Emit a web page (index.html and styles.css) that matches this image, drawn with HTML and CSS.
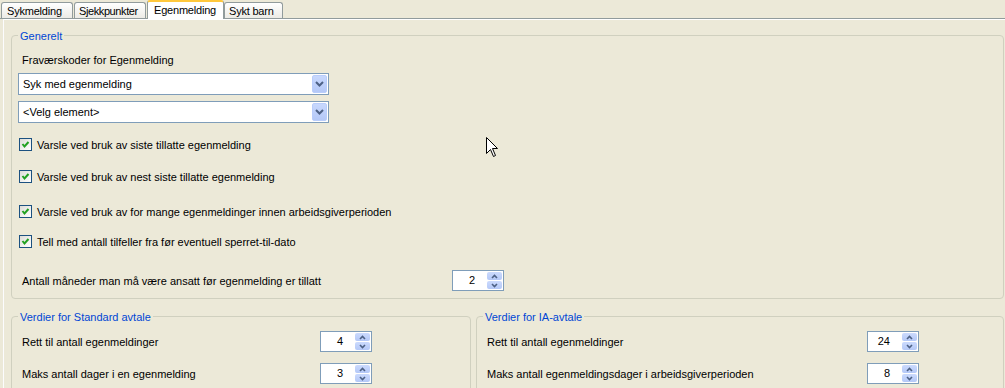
FILE: index.html
```html
<!DOCTYPE html>
<html lang="no">
<head>
    <meta charset="UTF-8">
    <title>Egenmelding</title>
    <link rel="stylesheet" href="styles.css">
</head>
<body>
<div class="tabs">
    <div class="tab t-syk">Sykmelding</div>
    <div class="tab t-sjekk">Sjekkpunkter</div>
    <div class="tab t-egen active">Egenmelding</div>
    <div class="tab t-barn">Sykt barn</div>
</div>

<div class="page">
    <!-- Generelt -->
    <div class="group general">
        <span class="group-title">Generelt</span>
        <div class="field-label">Fraværskoder for Egenmelding</div>
        <div class="combo first">
            <span class="combo-text">Syk med egenmelding</span>
            <div class="combo-btn"><svg width="9" height="6" viewBox="0 0 9 6"><path d="M1 1 L4.5 4.5 L8 1" fill="none" stroke="#4d6185" stroke-width="2"/></svg></div>
        </div>
        <div class="combo">
            <span class="combo-text">&lt;Velg element&gt;</span>
            <div class="combo-btn"><svg width="9" height="6" viewBox="0 0 9 6"><path d="M1 1 L4.5 4.5 L8 1" fill="none" stroke="#4d6185" stroke-width="2"/></svg></div>
        </div>

        <div class="check-row r1"><span class="checkbox"><svg width="9" height="9" viewBox="0 0 9 9"><path d="M1.5 4 L3.5 6.5 L7.5 2" fill="none" stroke="#21a121" stroke-width="2"/></svg></span>Varsle ved bruk av siste tillatte egenmelding</div>
        <div class="check-row r2"><span class="checkbox"><svg width="9" height="9" viewBox="0 0 9 9"><path d="M1.5 4 L3.5 6.5 L7.5 2" fill="none" stroke="#21a121" stroke-width="2"/></svg></span>Varsle ved bruk av nest siste tillatte egenmelding</div>
        <div class="check-row r3"><span class="checkbox"><svg width="9" height="9" viewBox="0 0 9 9"><path d="M1.5 4 L3.5 6.5 L7.5 2" fill="none" stroke="#21a121" stroke-width="2"/></svg></span>Varsle ved bruk av for mange egenmeldinger innen arbeidsgiverperioden</div>
        <div class="check-row r4"><span class="checkbox"><svg width="9" height="9" viewBox="0 0 9 9"><path d="M1.5 4 L3.5 6.5 L7.5 2" fill="none" stroke="#21a121" stroke-width="2"/></svg></span>Tell med antall tilfeller fra før eventuell sperret-til-dato</div>

        <div class="spin-row months">
            <span class="spin-label">Antall måneder man må være ansatt før egenmelding er tillatt</span>
            <div class="spin"><span class="spin-val">2</span><div class="spin-btns"><div class="spin-up"><svg width="7" height="5" viewBox="0 0 7 5"><path d="M1 4 L3.5 1.5 L6 4" fill="none" stroke="#4d6185" stroke-width="1.6"/></svg></div><div class="spin-down"><svg width="7" height="5" viewBox="0 0 7 5"><path d="M1 1 L3.5 3.5 L6 1" fill="none" stroke="#4d6185" stroke-width="1.6"/></svg></div></div></div>
        </div>
    </div>

    <div class="bottom">
        <!-- Standard avtale -->
        <div class="group std">
            <span class="group-title">Verdier for Standard avtale</span>
            <div class="spin-row">
                <span class="spin-label">Rett til antall egenmeldinger</span>
                <div class="spin"><span class="spin-val">4</span><div class="spin-btns"><div class="spin-up"><svg width="7" height="5" viewBox="0 0 7 5"><path d="M1 4 L3.5 1.5 L6 4" fill="none" stroke="#4d6185" stroke-width="1.6"/></svg></div><div class="spin-down"><svg width="7" height="5" viewBox="0 0 7 5"><path d="M1 1 L3.5 3.5 L6 1" fill="none" stroke="#4d6185" stroke-width="1.6"/></svg></div></div></div>
            </div>
            <div class="spin-row">
                <span class="spin-label">Maks antall dager i en egenmelding</span>
                <div class="spin"><span class="spin-val">3</span><div class="spin-btns"><div class="spin-up"><svg width="7" height="5" viewBox="0 0 7 5"><path d="M1 4 L3.5 1.5 L6 4" fill="none" stroke="#4d6185" stroke-width="1.6"/></svg></div><div class="spin-down"><svg width="7" height="5" viewBox="0 0 7 5"><path d="M1 1 L3.5 3.5 L6 1" fill="none" stroke="#4d6185" stroke-width="1.6"/></svg></div></div></div>
            </div>
        </div>

        <!-- IA-avtale -->
        <div class="group ia">
            <span class="group-title">Verdier for IA-avtale</span>
            <div class="spin-row">
                <span class="spin-label">Rett til antall egenmeldinger</span>
                <div class="spin"><span class="spin-val">24</span><div class="spin-btns"><div class="spin-up"><svg width="7" height="5" viewBox="0 0 7 5"><path d="M1 4 L3.5 1.5 L6 4" fill="none" stroke="#4d6185" stroke-width="1.6"/></svg></div><div class="spin-down"><svg width="7" height="5" viewBox="0 0 7 5"><path d="M1 1 L3.5 3.5 L6 1" fill="none" stroke="#4d6185" stroke-width="1.6"/></svg></div></div></div>
            </div>
            <div class="spin-row">
                <span class="spin-label">Maks antall egenmeldingsdager i arbeidsgiverperioden</span>
                <div class="spin"><span class="spin-val">8</span><div class="spin-btns"><div class="spin-up"><svg width="7" height="5" viewBox="0 0 7 5"><path d="M1 4 L3.5 1.5 L6 4" fill="none" stroke="#4d6185" stroke-width="1.6"/></svg></div><div class="spin-down"><svg width="7" height="5" viewBox="0 0 7 5"><path d="M1 1 L3.5 3.5 L6 1" fill="none" stroke="#4d6185" stroke-width="1.6"/></svg></div></div></div>
            </div>
        </div>
    </div>
</div>

<!-- musepeker -->
<svg class="cursor" width="13" height="21" viewBox="0 0 13 21"><path d="M0.5 0.5 L0.5 16.5 L4.5 12.5 L7.5 19.5 L9.5 18.5 L6.5 11.5 L11.5 11.5 Z" fill="#fff" stroke="#000" stroke-width="1"/></svg>
</body>
</html>
```

FILE: styles.css
```css
/* Windows XP-stil */
:root {
    --xp-bg: #ece9d8;
    --xp-tab-border: #919b9c;
    --xp-group-border: #d0d0bf;
    --xp-input-border: #7f9db9;
    --xp-title: #0046d5;
}

body {
    margin: 0;
    background: var(--xp-bg);
    font-family: 'Liberation Sans', Arial, sans-serif;
    font-size: 11px;
    color: #000;
    position: relative;
    height: 388px;
    overflow: hidden;
}

/* faner */
.tabs {
    display: flex;
    align-items: flex-end;
    height: 18px;
    padding-left: 1px;
    border-bottom: 1px solid var(--xp-tab-border);
}

.tab {
    height: 15px;
    line-height: 16px;
    padding-left: 5px;
    margin-right: 1px;
    box-sizing: content-box;
    border: 1px solid var(--xp-tab-border);
    border-bottom: none;
    border-radius: 3px 3px 0 0;
    background: linear-gradient(#fff, #ecebe6);
    white-space: nowrap;
    overflow: hidden;
    letter-spacing: -0.2px;
}

.t-syk { width: 65px; }
.t-sjekk { width: 65px; padding-left: 4px; width: 66px; letter-spacing: -0.4px; }
.t-egen { width: 69px; }
.t-barn { width: 53px; padding-left: 4px; }

.tab.active {
    position: relative;
    height: 17px;
    line-height: 17px;
    margin-bottom: -1px;
    margin-right: 0;
    padding-left: 6px;
    background: #fff;
    border-top: 2px solid #ffc83c;
    z-index: 1;
}

.page {
    margin-left: 3px;
    padding: 15px 1px 0 7px;
    border-top: 1px solid #fff;
    border-left: 1px solid #fcfcfe;
    height: 369px;
    box-sizing: border-box;
    overflow: hidden;
}

/* grupper */
.group {
    position: relative;
    border: 1px solid var(--xp-group-border);
    border-radius: 4px;
    padding: 0 6px;
}

.group-title {
    position: absolute;
    top: -7px;
    left: 6px;
    padding: 0 2px;
    line-height: 14px;
    color: var(--xp-title);
    background: var(--xp-bg);
}

.general {
    padding-top: 16px;
    padding-bottom: 7px;
}

.field-label {
    height: 16px;
    line-height: 16px;
    padding-left: 4px;
}

.combo {
    display: flex;
    width: 311px;
    height: 22px;
    margin-top: 6px;
    box-sizing: border-box;
    border: 1px solid var(--xp-input-border);
    background: #fff;
}

.combo.first {
    margin-top: 5px;
}

.combo-text {
    flex: 1;
    line-height: 20px;
    padding-left: 4px;
}

.combo-btn {
    width: 15px;
    margin: 1px;
    box-sizing: border-box;
    border: 1px solid #b9cdfb;
    border-radius: 2px;
    background: linear-gradient(#c8d8fd, #b4c8f7);
    display: flex;
    align-items: center;
    justify-content: center;
}

.check-row {
    display: flex;
    align-items: center;
    height: 15px;
    padding-left: 1px;
}

.r1 { margin-top: 14px; }
.r2 { margin-top: 17px; }
.r3 { margin-top: 20px; }
.r4 { margin-top: 15px; }

.checkbox {
    width: 13px;
    height: 13px;
    box-sizing: border-box;
    border: 1px solid #1c5180;
    background: linear-gradient(135deg, #dcdcd7, #fff);
    margin-right: 5px;
    display: flex;
    align-items: center;
    justify-content: center;
}

/* tallfelt */
.spin-row {
    display: flex;
    align-items: center;
    height: 21px;
    margin-top: 11px;
}

.spin-row.months {
    margin-top: 21px;
}

.spin-label {
    padding-left: 4px;
    box-sizing: border-box;
}

.general .spin-label { width: 434px; }
.std .spin-label { width: 302px; }
.ia .spin-label { width: 384px; }

.spin {
    display: flex;
    width: 52px;
    height: 21px;
    box-sizing: border-box;
    border: 1px solid var(--xp-input-border);
    background: #fff;
}

.spin-val {
    flex: 1;
    text-align: right;
    line-height: 19px;
    padding-right: 11px;
}

.spin-btns {
    width: 15px;
    margin: 1px;
    display: flex;
    flex-direction: column;
    gap: 1px;
}

.spin-up,
.spin-down {
    flex: 1;
    border-radius: 2px;
    background: linear-gradient(#cbdafd, #b4c8f7);
    display: flex;
    align-items: center;
    justify-content: center;
}

.bottom {
    display: grid;
    grid-template-columns: 460px 1fr;
    gap: 5px;
    margin-top: 17px;
}

.bottom .group {
    padding-top: 14px;
    height: 80px;
}

.bottom .spin-row:first-of-type {
    margin-top: 0;
}

.cursor {
    position: absolute;
    left: 486px;
    top: 137px;
}
```
